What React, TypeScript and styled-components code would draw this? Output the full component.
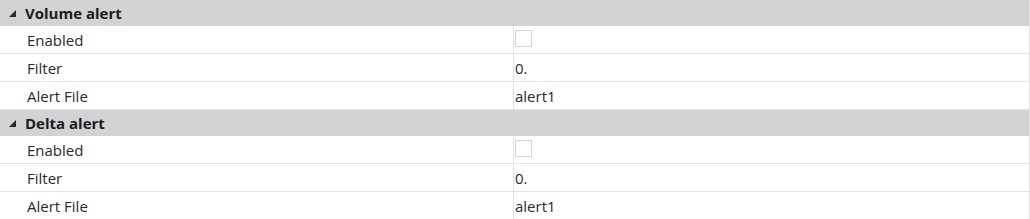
import React from 'react'
import styled, { createGlobalStyle } from 'styled-components'

type Prop = { name: string; kind: 'check' | 'text'; value?: string }
type Group = { title: string; props: Prop[] }

const groups: Group[] = [
  {
    title: 'Volume alert',
    props: [
      { name: 'Enabled', kind: 'check' },
      { name: 'Filter', kind: 'text', value: '0.' },
      { name: 'Alert File', kind: 'text', value: 'alert1' },
    ],
  },
  {
    title: 'Delta alert',
    props: [
      { name: 'Enabled', kind: 'check' },
      { name: 'Filter', kind: 'text', value: '0.' },
      { name: 'Alert File', kind: 'text', value: 'alert1' },
    ],
  },
]

const GlobalStyle = createGlobalStyle`
  body {
    margin: 0;
    background: #ffffff;
    font-family: "Open Sans", "Noto Sans", sans-serif;
  }
`

const Grid = styled.div`
  width: 1029px;
  border-right: 1px solid #e2e2ea;
  display: flex;
  flex-direction: column;
`

const Header = styled.div`
  height: 26px;
  background: #d3d3d3;
  display: flex;
  align-items: center;
  padding-left: 9px;
  gap: 9px;
  font-size: 15px;
  font-weight: 700;
  color: #1c1c1c;
`

const Arrow = styled.svg`
  width: 7px;
  height: 7px;
  flex: none;
`

const Row = styled.div`
  height: 27px;
  display: grid;
  grid-template-columns: 514px 1fr;
  border-bottom: 1px solid #e2e2ea;
  font-size: 15px;
  color: #2a2a2a;
`

const NameCell = styled.div`
  display: flex;
  align-items: center;
  padding-left: 27px;
  border-right: 1px solid #e2e2ea;
`

const ValueCell = styled.div`
  display: flex;
  align-items: center;
  padding-left: 1px;
`

const Check = styled.span`
  width: 15px;
  height: 15px;
  border: 1px solid #d6d6d6;
  background: #fff;
  margin-top: -2px;
`

export default function App() {
  return (
    <>
      <GlobalStyle />
      <Grid>
        {groups.map((g) => (
          <React.Fragment key={g.title}>
            <Header>
              <Arrow viewBox="0 0 7 7">
                <path d="M7 0 L7 7 L0 7 Z" fill="#2b2b2b" />
              </Arrow>
              {g.title}
            </Header>
            {g.props.map((p) => (
              <Row key={p.name}>
                <NameCell>{p.name}</NameCell>
                <ValueCell>{p.kind === 'check' ? <Check /> : p.value}</ValueCell>
              </Row>
            ))}
          </React.Fragment>
        ))}
      </Grid>
    </>
  )
}
